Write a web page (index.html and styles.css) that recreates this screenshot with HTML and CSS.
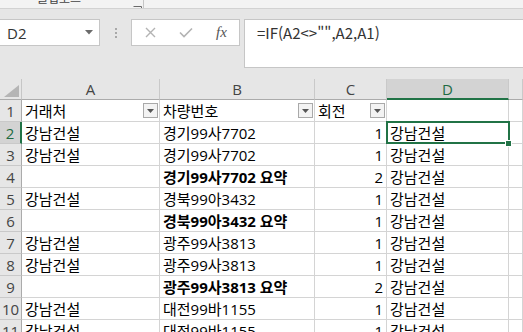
FILE: index.html
```html
<!DOCTYPE html>
<html lang="ko">
<head>
<meta charset="utf-8">
<title>Excel</title>
<link rel="stylesheet" href="styles.css">
</head>
<body>
<div class="ribbon">
  <div class="group-label">클립보드</div>
  <div class="launcher"><svg width="9" height="9" viewBox="0 0 9 9"><path d="M0.5 0.5H8.5V8.5" fill="none" stroke="#6a6a6a" stroke-width="1"/><path d="M2 2L7 7M7 4V7H4" fill="none" stroke="#6a6a6a" stroke-width="1"/></svg></div>
  <div class="rsep"></div>
</div>
<div class="fbar">
  <div class="namebox"><span>D2</span><svg width="8" height="5" viewBox="0 0 8 5"><path d="M0 0H8L4 4.5Z" fill="#6b6b6b"/></svg></div>
  <div class="grip"><i></i><i></i><i></i></div>
  <div class="fxbox">
    <svg class="ico-x" width="11" height="11" viewBox="0 0 11 11"><path d="M1 1L10 10M10 1L1 10" stroke="#b3b3b3" stroke-width="1.4" fill="none"/></svg>
    <svg class="ico-ok" width="14" height="11" viewBox="0 0 14 11"><path d="M1 5.5L5 9.5L13 1.5" stroke="#b3b3b3" stroke-width="1.6" fill="none"/></svg>
    <span class="fx">fx</span>
  </div>
  <div class="formula">=IF(A2&lt;&gt;"",A2,A1)</div>
</div>
<div class="sheet">
  <div class="corner"><svg width="15" height="12" viewBox="0 0 15 12"><path d="M15 0V12H0Z" fill="#b5b5b5"/></svg></div>
  <div class="h">A</div>
  <div class="h">B</div>
  <div class="h">C</div>
  <div class="h selcol">D</div>
  <div class="h"></div>

  <div class="rh">1</div>
  <div class="c fcell"><span>거래처</span><span class="fb"><svg width="7" height="4" viewBox="0 0 7 4"><path d="M0 0H7L3.5 4Z" fill="#555"/></svg></span></div>
  <div class="c fcell"><span>차량번호</span><span class="fb"><svg width="7" height="4" viewBox="0 0 7 4"><path d="M0 0H7L3.5 4Z" fill="#555"/></svg></span></div>
  <div class="c fcell"><span>회전</span><span class="fb"><svg width="7" height="4" viewBox="0 0 7 4"><path d="M0 0H7L3.5 4Z" fill="#555"/></svg></span></div>
  <div class="c"></div>
  <div class="c"></div>

  <div class="rh selrow">2</div>
  <div class="c">강남건설</div>
  <div class="c">경기99사7702</div>
  <div class="c num">1</div>
  <div class="c sel">강남건설</div>
  <div class="c"></div>

  <div class="rh">3</div>
  <div class="c">강남건설</div>
  <div class="c">경기99사7702</div>
  <div class="c num">1</div>
  <div class="c">강남건설</div>
  <div class="c"></div>

  <div class="rh">4</div>
  <div class="c"></div>
  <div class="c b">경기99사7702 요약</div>
  <div class="c num">2</div>
  <div class="c">강남건설</div>
  <div class="c"></div>

  <div class="rh">5</div>
  <div class="c">강남건설</div>
  <div class="c">경북99아3432</div>
  <div class="c num">1</div>
  <div class="c">강남건설</div>
  <div class="c"></div>

  <div class="rh">6</div>
  <div class="c"></div>
  <div class="c b">경북99아3432 요약</div>
  <div class="c num">1</div>
  <div class="c">강남건설</div>
  <div class="c"></div>

  <div class="rh">7</div>
  <div class="c">강남건설</div>
  <div class="c">광주99사3813</div>
  <div class="c num">1</div>
  <div class="c">강남건설</div>
  <div class="c"></div>

  <div class="rh">8</div>
  <div class="c">강남건설</div>
  <div class="c">광주99사3813</div>
  <div class="c num">1</div>
  <div class="c">강남건설</div>
  <div class="c"></div>

  <div class="rh">9</div>
  <div class="c"></div>
  <div class="c b">광주99사3813 요약</div>
  <div class="c num">2</div>
  <div class="c">강남건설</div>
  <div class="c"></div>

  <div class="rh">10</div>
  <div class="c">강남건설</div>
  <div class="c">대전99바1155</div>
  <div class="c num">1</div>
  <div class="c">강남건설</div>
  <div class="c"></div>

  <div class="rh">11</div>
  <div class="c">강남건설</div>
  <div class="c">대전99바1155</div>
  <div class="c num">1</div>
  <div class="c">강남건설</div>
  <div class="c"></div>
</div>
</body>
</html>
```

FILE: styles.css
```css
html, body {
  margin: 0;
  padding: 0;
}
body {
  width: 523px;
  height: 332px;
  overflow: hidden;
  background: #ffffff;
  font-family: "Noto Sans CJK KR", "Noto Sans", sans-serif;
  color: #000;
}

/* ribbon bottom strip */
.ribbon {
  height: 8px;
  background: #f3f3f3;
  border-bottom: 1px solid #d2d2d2;
  display: flex;
  overflow: hidden;
}
.group-label {
  margin-left: 37px;
  width: 96px;
  font-size: 12px;
  line-height: 12px;
  margin-top: -8px;
  color: #444;
}
.launcher {
  width: 10px;
  margin-top: -4px;
}
.rsep {
  width: 1px;
  height: 8px;
  background: #c6c6c6;
}

/* formula bar */
.fbar {
  height: 70px;
  box-sizing: border-box;
  background: #e6e6e6;
  padding-top: 10px;
  display: flex;
  align-items: flex-start;
}
.namebox {
  width: 100px;
  height: 27px;
  box-sizing: border-box;
  background: #fff;
  border: 1px solid #c6c6c6;
  border-left: none;
  display: flex;
  align-items: center;
  justify-content: space-between;
  padding: 0 6px 0 7px;
  font-family: "Open Sans", "Noto Sans CJK KR", sans-serif;
  font-size: 15px;
  color: #333;
}
.grip {
  width: 31px;
  height: 27px;
  display: flex;
  flex-direction: column;
  align-items: center;
  justify-content: center;
  gap: 2px;
}
.grip i {
  display: block;
  width: 2px;
  height: 2px;
  background: #a8a8a8;
}
.fxbox {
  width: 109px;
  height: 27px;
  box-sizing: border-box;
  background: #fff;
  border: 1px solid #c6c6c6;
  display: flex;
  align-items: center;
}
.ico-x {
  margin-left: 13px;
}
.ico-ok {
  margin-left: 23px;
}
.fx {
  margin-left: 23px;
  font-family: "Liberation Serif", serif;
  font-style: italic;
  font-size: 15px;
  color: #555;
  line-height: 15px;
}
.formula {
  flex: 1;
  margin-left: 4px;
  height: 49px;
  box-sizing: border-box;
  background: #fff;
  border: 1px solid #c6c6c6;
  border-right: none;
  padding: 3px 0 0 12px;
  font-size: 15px;
  line-height: 20px;
  color: #333;
}

/* sheet grid */
.sheet {
  display: grid;
  grid-template-columns: 22px 138px 155px 72px 122px 14px;
  grid-template-rows: 21px repeat(11, 22px);
  font-family: "Open Sans", "Noto Sans CJK KR", sans-serif;
}
.corner {
  background: #e6e6e6;
  border-right: 1px solid #c6c6c6;
  border-bottom: 1px solid #ababab;
  box-sizing: border-box;
  display: flex;
  align-items: flex-end;
  justify-content: flex-end;
  padding: 0 2px 2px 0;
}
.h {
  background: #e6e6e6;
  border-right: 1px solid #c9c9c9;
  border-bottom: 1px solid #ababab;
  box-sizing: border-box;
  display: flex;
  align-items: center;
  justify-content: center;
  font-size: 15px;
  color: #444;
}
.h.selcol {
  background: #d3d3d3;
  color: #1e6b42;
  border-bottom: 2px solid #217346;
}
.rh {
  background: #e6e6e6;
  border-right: 1px solid #ababab;
  border-bottom: 1px solid #c9c9c9;
  box-sizing: border-box;
  display: flex;
  align-items: center;
  justify-content: center;
  font-size: 15px;
  color: #444;
}
.rh.selrow {
  background: #d3d3d3;
  color: #1e6b42;
  border-right: 2px solid #217346;
}
.c {
  border-right: 1px solid #d4d4d4;
  border-bottom: 1px solid #d4d4d4;
  box-sizing: border-box;
  display: flex;
  align-items: center;
  padding: 0 3px;
  font-size: 15px;
  white-space: nowrap;
  color: #000;
}
.c.num {
  justify-content: flex-end;
}
.c.b {
  font-weight: 700;
}
.c.fcell {
  padding-right: 1px;
}
.fb {
  margin-left: auto;
  width: 15px;
  height: 15px;
  box-sizing: border-box;
  border: 1px solid #a9a9a9;
  background: #f3f3f3;
  display: flex;
  align-items: center;
  justify-content: center;
}
.c.sel {
  position: relative;
  z-index: 1;
}
.c.sel::after {
  content: "";
  position: absolute;
  left: -1px;
  top: -1px;
  right: -2px;
  bottom: -1px;
  border: 2px solid #217346;
}
.c.sel::before {
  content: "";
  position: absolute;
  width: 5px;
  height: 5px;
  right: -4px;
  bottom: -4px;
  background: #217346;
  border: 1px solid #fff;
  z-index: 2;
}
```
